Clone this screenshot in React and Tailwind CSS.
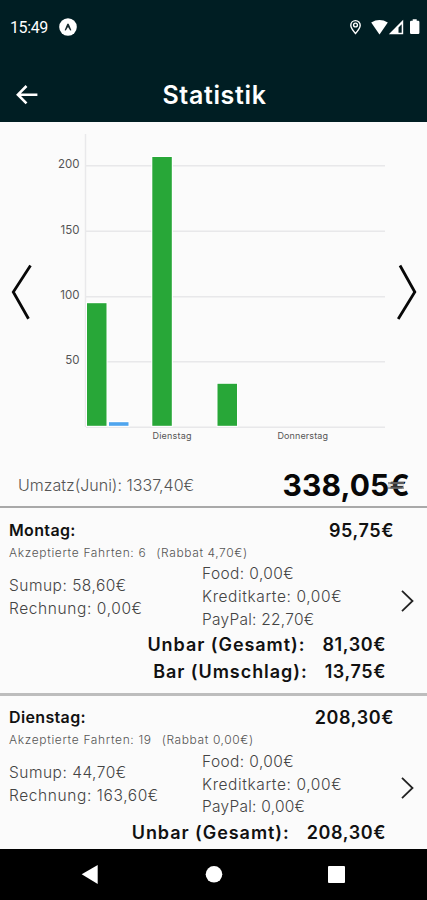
import React from 'react';

const ticks = [
  { label: '200', y: 43.5 },
  { label: '150', y: 109 },
  { label: '100', y: 174.5 },
  { label: '50', y: 239.5 },
];

const days = [
  {
    name: 'Montag:',
    total: '95,75€',
    rides: 'Akzeptierte Fahrten: 6',
    discount: '(Rabbat 4,70€)',
    sumup: '58,60€',
    rechnung: '0,00€',
    food: '0,00€',
    kreditkarte: '0,00€',
    paypal: '22,70€',
    sums: [
      { label: 'Unbar (Gesamt):', value: '81,30€' },
      { label: 'Bar (Umschlag):', value: '13,75€' },
    ],
  },
  {
    name: 'Dienstag:',
    total: '208,30€',
    rides: 'Akzeptierte Fahrten: 19',
    discount: '(Rabbat 0,00€)',
    sumup: '44,70€',
    rechnung: '163,60€',
    food: '0,00€',
    kreditkarte: '0,00€',
    paypal: '0,00€',
    sums: [{ label: 'Unbar (Gesamt):', value: '208,30€' }],
  },
];

function StatusBar() {
  return (
    <div className="flex h-[54px] items-center justify-between pl-[10px] pr-[6px]">
      <div className="flex items-center gap-[11px]">
        <span className="pt-[2px] font-[Roboto] text-[16px] leading-none tracking-[-0.4px]">15:49</span>
        <svg width="18" height="18" viewBox="0 0 18 18">
          <circle cx="9" cy="9" r="8.8" fill="#fff" />
          <path d="M5.6 12.2 8.1 6.3Q9 4.8 9.9 6.3l2.5 5.9-1.2.4L9 9l-2.2 3.6z" fill="#17292d" />
        </svg>
      </div>
      <svg width="72" height="18" viewBox="349 18 72 18" fill="#fff">
        <path d="M355.5 20.6a4.7 4.7 0 0 1 4.7 4.7c0 3-4.7 8.2-4.7 8.2s-4.7-5.2-4.7-8.2a4.7 4.7 0 0 1 4.7-4.7z" fill="none" stroke="#fff" strokeWidth="1.4" />
        <circle cx="355.5" cy="25" r="1.9" fill="none" stroke="#fff" strokeWidth="1.4" />
        <path d="M371.2 22.5q8.3-4.8 16.6 0L379.5 34.4z" />
        <path d="M403.2 19.8V34.2H388.8zm-1.5 4.4-3.2 3.2v5.4h3.2z" fillRule="evenodd" />
        <path d="M412.7 19.3h4v1.5h1.5q1.2 0 1.2 1.2v10.7q0 1.3-1.2 1.3h-7q-1.2 0-1.2-1.3V22q0-1.2 1.2-1.2h1.5z" />
      </svg>
    </div>
  );
}

function TitleBar() {
  return (
    <div className="grid h-[68px] grid-cols-[48px_1fr_48px] items-center pt-[14px]">
      <svg className="ml-4 block" width="22" height="20" viewBox="0 0 22 20" fill="none" stroke="#fff" strokeWidth="2.6">
        <path d="M10.5 1 1.9 9.7l8.6 8.7M2 9.7h19.4" />
      </svg>
      <h1 className="pl-[2px] text-center text-[25px] font-semibold leading-none tracking-[0.65px]">Statistik</h1>
    </div>
  );
}

function Chart() {
  return (
    <svg className="block shrink-0" width="427" height="333" viewBox="0 0 427 333">
      <path d="M85.5 12v293" stroke="#e9e9eb" strokeWidth="1.5" />
      {ticks.map((tick) => (
        <g key={tick.label}>
          <path d={`M86 ${tick.y + 0.3}H385`} stroke="#e8e8ea" strokeWidth="1.6" />
          <text x="79.5" y={tick.y + 2.5} textAnchor="end" fontSize="11.5" fill="#555">{tick.label}</text>
        </g>
      ))}
      <path d="M86 305.2H385" stroke="#e8e8ea" strokeWidth="1.5" />
      <g fill="#28a738" stroke="#fff" strokeWidth="2" paintOrder="stroke">
        <rect x="87" y="181.2" width="19.5" height="122.6" />
        <rect x="152.3" y="35" width="19.5" height="268.8" />
        <rect x="217.5" y="261.8" width="19.5" height="42" />
        <rect x="109" y="300.2" width="19.5" height="3.6" fill="#4fa5ee" />
      </g>
      <g fontSize="9" fill="#555">
        <text x="152.5" y="316.5" textLength="39">Dienstag</text>
        <text x="277.5" y="316.5" textLength="50.5">Donnerstag</text>
      </g>
      <g fill="none" stroke="#080808" strokeWidth="2.8" strokeLinejoin="miter">
        <path d="M30.5 143.5 13.3 170 28.5 196.8" />
        <path d="M400 143.5 414.8 170 398.2 197" />
      </g>
    </svg>
  );
}

function DayCard({ day }) {
  return (
    <section className="h-[187.5px] shrink-0 border-b-[3px] border-[#bdbdbd] pl-[9px]">
      <div className="flex h-[43px] items-center justify-between pr-[33px] font-semibold text-[#111]">
        <span className="text-[16px] tracking-[0.35px]">{day.name}</span>
        <span className="pt-[1px] text-[18px] tracking-[0.6px]">{day.total}</span>
      </div>
      <div className="flex h-[3px] items-center gap-[10px] text-[12px] font-light leading-none text-[#555]">
        <span className="tracking-[0.65px]">{day.rides}</span>
        <span className="tracking-[0.6px]">{day.discount}</span>
      </div>
      <div className="flex h-[76px] items-center pt-[11px] text-[15.5px] font-light leading-[22.7px] text-[#444]">
        <div className="w-[193px]">
          <p className="tracking-[0.5px]">Sumup: {day.sumup}</p>
          <p className="tracking-[0.6px]">Rechnung: {day.rechnung}</p>
        </div>
        <div className="w-[198px]">
          <p className="tracking-[0.4px]">Food: {day.food}</p>
          <p className="tracking-[0.6px]">Kreditkarte: {day.kreditkarte}</p>
          <p className="tracking-[0.25px]">PayPal: {day.paypal}</p>
        </div>
        <svg className="mt-[6px] block" width="15" height="24" viewBox="0 0 15 24" fill="none" stroke="#222" strokeWidth="1.8">
          <path d="M2 1.8 12.5 12 2 22.2" />
        </svg>
      </div>
      <div className="pr-[41px] pt-[1px] text-[18px] font-semibold leading-[27px] text-[#111]">
        {day.sums.map((sum) => (
          <div key={sum.label} className="flex justify-end gap-[17px]">
            <span className="tracking-[0.95px]">{sum.label}</span>
            <span className="tracking-[0.6px]">{sum.value}</span>
          </div>
        ))}
      </div>
    </section>
  );
}

function NavigationBar() {
  return (
    <nav className="flex h-[51px] shrink-0 items-center bg-black pl-[80px]">
      <svg width="270" height="24" viewBox="80 863 270 24" fill="#fff">
        <path d="M81.7 874.3 97.7 865v19z" />
        <circle cx="214" cy="874.3" r="8.3" />
        <rect x="328" y="866" width="17" height="17" rx="1" />
      </svg>
    </nav>
  );
}

export default function App() {
  return (
    <div className="flex h-[900px] w-[427px] flex-col overflow-hidden bg-[#fbfbfb] font-[Inter,sans-serif]">
      <header className="h-[122px] shrink-0 bg-[#001e23] text-white">
        <StatusBar />
        <TitleBar />
      </header>
      <main className="flex min-h-0 flex-1 flex-col overflow-hidden">
        <Chart />
        <div className="flex h-[53px] shrink-0 items-center justify-between border-b-2 border-[#a9a9a9] pl-[18px] pr-[17px] pt-[8px]">
          <span className="text-[16px] font-light text-[#555]">Umzatz(Juni): 1337,40€</span>
          <span className="relative text-[30px] font-bold leading-none tracking-[0.1px] text-[#080808]">
            338,05€
            {/* faint menu lines showing through the euro sign */}
            <span className="absolute right-[6px] top-[12px] h-[7px] w-[16px] border-y-2 border-[#777]/60 bg-[#999]/30" />
          </span>
        </div>
        {days.map((day) => <DayCard key={day.name} day={day} />)}
      </main>
      <NavigationBar />
    </div>
  );
}
